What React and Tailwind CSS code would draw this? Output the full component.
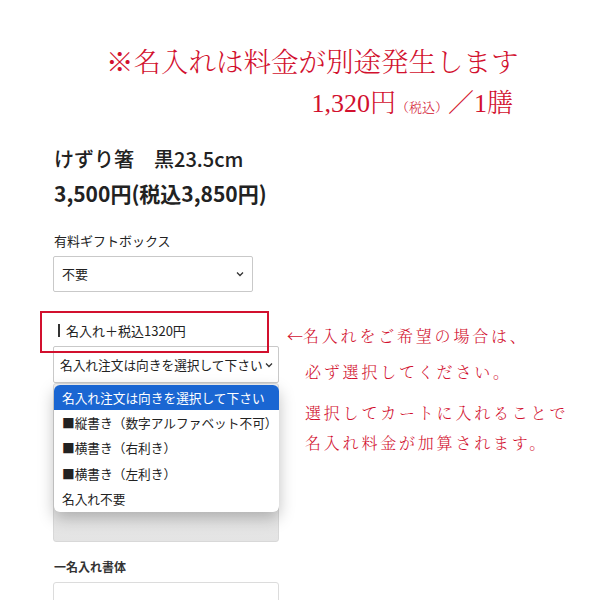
import React from "react";

const sans = { fontFamily: '"Noto Sans CJK JP", "Noto Sans", sans-serif' };
const serif = { fontFamily: '"Liberation Serif", "Noto Serif CJK JP", "Noto Sans CJK JP", serif' };

function Chevron({ className }) {
  return (
    <svg className={className} width="8" height="6" viewBox="0 0 8 6" fill="none">
      <path d="M1 1.5 L4 4.5 L7 1.5" stroke="#333" strokeWidth="1.3" />
    </svg>
  );
}

export default function App() {
  return (
    <div className="relative w-[600px] h-[600px] overflow-hidden bg-white text-[#222]" style={sans}>
      {/* Heading */}
      <div className="pt-[44px] text-[#d2102e]" style={serif}>
        <div className="pl-[106px] h-[38px] leading-[38px] text-[27.5px] font-light whitespace-nowrap">
          ※名入れは料金が別途発生します
        </div>
        <div className="flex justify-end items-baseline pr-[87px] mt-[3px] h-[38px] leading-[38px] text-[26px] font-light whitespace-nowrap">
          <span>1,320円</span>
          <span className="text-[13px]">（税込）</span>
          <span>／1膳</span>
        </div>
      </div>

      <div className="flex items-start pl-[53px] pt-[19px]">
        {/* Left column */}
        <div className="w-[226px] flex flex-col">
          <div className="pl-[1px] text-[20px] font-medium leading-[34px] whitespace-nowrap">けずり箸　黒23.5cm</div>
          <div className="pl-[1px] text-[21px] font-bold leading-[34px] whitespace-nowrap">3,500円(税込3,850円)</div>
          <div className="mt-[21px] pl-[1px] text-[13px] leading-[20px]">有料ギフトボックス</div>
          <div className="mt-[5px] w-[200px] h-[36px] border border-[#c9c9c9] rounded-[2px] flex items-center justify-between px-[8px] text-[13px]">
            <span>不要</span>
            <Chevron />
          </div>
          <div className="h-[20px] mt-[6px]" />
          <div className="mt-[2px] pl-[5px] text-[13px] leading-[22px] whitespace-nowrap">
            <span className="inline-block w-[2px] h-[13px] bg-[#333] align-[-1px] mr-[6px]" />名入れ＋税込1320円
          </div>
          <div className="mt-[4px] h-[37px] border border-[#c9c9c9] rounded-[2px] flex items-center justify-between pl-[6px] pr-[5px] text-[12.7px] whitespace-nowrap">
            <span>名入れ注文は向きを選択して下さい</span>
            <Chevron />
          </div>
          <div className="h-[159px] border border-[#d8d8d8] rounded-[3px] bg-gradient-to-b from-[#f2f2f2] to-[#e4e4e4]" />
          <div className="mt-[16px] pl-[1px] text-[12px] font-bold leading-[18px] text-[#333]">一名入れ書体</div>
          <div className="mt-[6px] h-[40px] border border-[#dcdcdc] rounded-[3px]" />
        </div>

        {/* Right column */}
        <div className="ml-[8px] pt-[175px] text-[#d2102e] text-[16px] tracking-[2.8px] font-light" style={serif}>
          <div className="leading-[36px] whitespace-nowrap">
            <span className="tracking-[0px]" style={sans}>←</span>名入れをご希望の場合は、
          </div>
          <div className="pl-[18px] leading-[36px] whitespace-nowrap">必ず選択してください。</div>
          <div className="pl-[18px] mt-[8px] leading-[30px] whitespace-nowrap">選択してカートに入れることで</div>
          <div className="pl-[18px] leading-[30px] whitespace-nowrap">名入れ料金が加算されます。</div>
        </div>
      </div>

      {/* Red annotation rectangle */}
      <div className="absolute left-[40px] top-[311px] w-[229px] h-[42px] border-2 border-[#d2102e]" />

      {/* Open dropdown list */}
      <div className="absolute left-[54px] top-[385px] w-[225px] rounded-[6px] bg-white shadow-[0_6px_16px_rgba(0,0,0,0.25)] overflow-hidden text-[12.7px] text-[#222]">
        <div className="h-[25px] leading-[25px] pl-[8px] bg-[#1a66d2] text-white whitespace-nowrap">名入れ注文は向きを選択して下さい</div>
        <div className="h-[25px] leading-[25px] pl-[8px] whitespace-nowrap">■縦書き（数字アルファベット不可）</div>
        <div className="h-[26px] leading-[26px] pl-[8px] whitespace-nowrap">■横書き（右利き）</div>
        <div className="h-[25px] leading-[25px] pl-[8px] whitespace-nowrap">■横書き（左利き）</div>
        <div className="h-[26px] leading-[26px] pl-[8px] whitespace-nowrap">名入れ不要</div>
      </div>
    </div>
  );
}
